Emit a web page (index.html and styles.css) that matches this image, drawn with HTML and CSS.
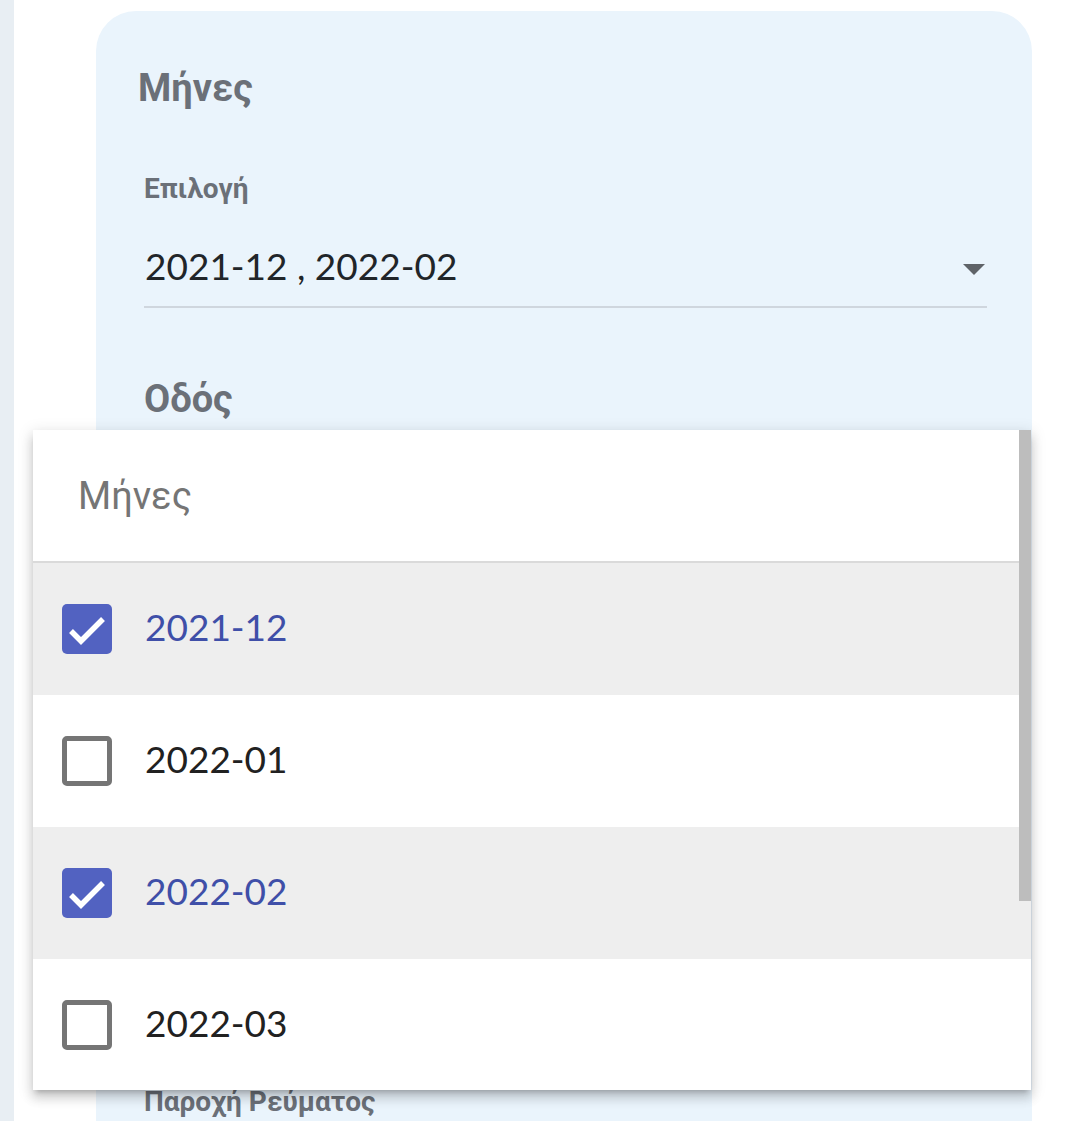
FILE: index.html
```html
<!DOCTYPE html>
<html lang="el">
<head>
<meta charset="utf-8">
<title>Μήνες</title>
<link rel="stylesheet" href="styles.css">
</head>
<body>
<div class="rail"></div>
<main class="main">
  <section class="card">
    <h2 class="card-title">Μήνες</h2>
    <div class="field">
      <div class="field-label">Επιλογή</div>
      <div class="select">
        <span class="select-value">2021-12 , 2022-02</span>
        <svg class="select-arrow" width="22" height="11" viewBox="0 0 22 11"><polygon points="0,0 22,0 11,11" fill="#5f6368"/></svg>
      </div>
    </div>
    <h2 class="section-title">Οδός</h2>
    <div class="field-label supply">Παροχή Ρεύματος</div>
  </section>

  <div class="menu">
    <div class="menu-header">Μήνες</div>
    <ul class="menu-list">
      <li class="menu-item selected">
        <span class="checkbox checked"><svg width="50" height="50" viewBox="0 0 50 50"><polyline points="9,27 19,37 41,15" fill="none" stroke="#fff" stroke-width="5.5"/></svg></span>
        <span class="item-text">2021-12</span>
      </li>
      <li class="menu-item">
        <span class="checkbox"></span>
        <span class="item-text">2022-01</span>
      </li>
      <li class="menu-item selected">
        <span class="checkbox checked"><svg width="50" height="50" viewBox="0 0 50 50"><polyline points="9,27 19,37 41,15" fill="none" stroke="#fff" stroke-width="5.5"/></svg></span>
        <span class="item-text">2022-02</span>
      </li>
      <li class="menu-item">
        <span class="checkbox"></span>
        <span class="item-text">2022-03</span>
      </li>
    </ul>
    <div class="scroll-thumb"></div>
  </div>
</main>
</body>
</html>
```

FILE: styles.css
```css
html, body {
  margin: 0;
  padding: 0;
  background: #ffffff;
  height: 100%;
  overflow: hidden;
}

body {
  display: flex;
  font-family: Roboto, "Noto Sans", sans-serif;
}

.rail {
  width: 14px;
  flex: none;
  background: #e8eef3;
  height: 1121px;
}

.main {
  flex: 1;
  padding: 11px 48px 0 82px;
  position: relative;
  height: 1121px;
  box-sizing: border-box;
  overflow: hidden;
}

.card {
  background: #eaf4fc;
  border-radius: 40px 40px 0 0;
  padding: 53px 45px 0 0;
  height: 1110px;
  box-sizing: border-box;
}

.card-title,
.section-title {
  margin: 0;
  font-family: Roboto, sans-serif;
  font-weight: 700;
  font-size: 38px;
  line-height: 48px;
  color: #6b7078;
}

.card-title {
  padding-left: 42px;
}

.section-title {
  padding-left: 48px;
  margin-top: 67px;
}

.field {
  padding-left: 48px;
}

.field-label {
  margin-top: 60px;
  font-family: Roboto, sans-serif;
  font-weight: 700;
  font-size: 28px;
  line-height: 34px;
  color: #6b7078;
}

.field-label.supply {
  padding-left: 48px;
  margin-top: 662px;
}

.select {
  margin-top: 38px;
  display: flex;
  align-items: center;
  justify-content: space-between;
  padding: 0 2px 18px 1px;
  border-bottom: 2px solid #cfd6de;
}

.select-value {
  font-family: Lato, "Noto Sans", sans-serif;
  font-size: 37px;
  line-height: 44px;
  color: #212529;
}

.select-arrow {
  display: block;
  margin-top: 6px;
}

.menu {
  position: absolute;
  left: 19px;
  top: 430px;
  width: 998px;
  height: 660px;
  background: #ffffff;
  box-shadow: 0 5px 5px -3px rgba(0,0,0,0.2), 0 8px 10px 1px rgba(0,0,0,0.12), 0 3px 14px 2px rgba(0,0,0,0.10);
  overflow: hidden;
}

.menu-header {
  height: 131px;
  display: flex;
  align-items: center;
  padding-left: 45px;
  border-bottom: 2px solid #dadada;
  font-family: Roboto, sans-serif;
  font-size: 38px;
  color: #757575;
}

.menu-list {
  list-style: none;
  margin: 0;
  padding: 0;
}

.menu-item {
  height: 132px;
  display: flex;
  align-items: center;
  padding-left: 29px;
  background: #ffffff;
}

.menu-item.selected {
  background: #eeeeee;
}

.checkbox {
  width: 50px;
  height: 50px;
  box-sizing: border-box;
  border: 5px solid #757575;
  border-radius: 5px;
  background: #ffffff;
  margin-right: 33px;
  flex: none;
  display: block;
}

.checkbox.checked {
  border: none;
  background: #5262c1;
}

.checkbox svg {
  display: block;
}

.item-text {
  font-family: Lato, "Noto Sans", sans-serif;
  font-size: 37px;
  line-height: 44px;
  margin-top: -4px;
  color: #212121;
}

.menu-item.selected .item-text {
  color: #3f4fa8;
}

.scroll-thumb {
  position: absolute;
  top: 0;
  right: 0;
  width: 12px;
  height: 471px;
  background: #bdbdbd;
}
```
